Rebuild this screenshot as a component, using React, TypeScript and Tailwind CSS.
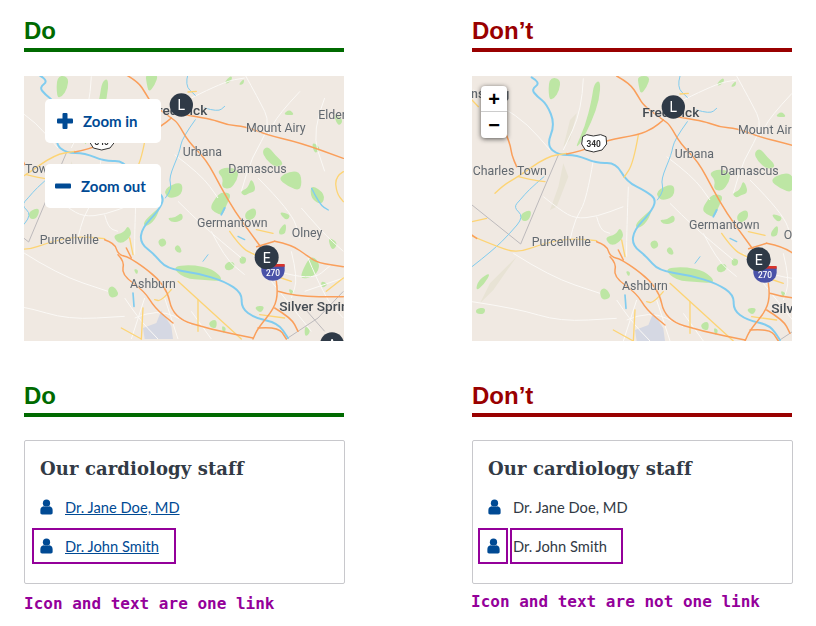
import type { ReactNode } from "react"

// map coordinates are 3x page pixels, both maps show the same drawing at different offsets
const greens = [
  "M405 380 L425 300 L432 250 L452 240 L448 300 L425 365 L392 430 L375 445 Z",
  "M296 232 L332 236 L328 272 L312 296 L296 300 Z",
  "M562 228 L602 228 L590 262 L572 284 L566 256 Z",
  "M798 254 L818 232 L824 242 L810 258 Z",
  "M840 262 L858 240 L858 258 Z",
  "M976 348 L994 334 L1010 350 L992 352 Z",
  "M912 458 L930 444 L950 470 L980 498 L952 510 L922 482 Z",
  "M776 520 L806 506 L842 516 L838 546 L816 574 L790 568 L796 540 Z",
  "M958 540 L1000 518 L1030 524 L1030 580 L990 566 Z",
  "M846 580 L870 570 L880 538 L896 578 L872 586 L858 594 Z",
  "M756 628 L772 600 L790 582 L822 586 L804 624 L794 652 L770 644 Z",
  "M858 644 L892 626 L896 656 L866 672 Z",
  "M962 696 L984 672 L984 706 L964 712 Z",
  "M628 658 L650 660 L672 642 L676 668 L640 674 Z",
  "M462 712 L498 704 L510 680 L524 712 L486 742 Z",
  "M598 728 L618 718 L628 738 L608 750 Z",
  "M648 748 L662 738 L674 764 L656 764 Z",
  "M798 802 L816 788 L832 798 L824 816 L804 818 Z",
  "M846 774 L866 778 L862 798 L844 796 Z",
  "M448 872 L466 862 L486 892 L456 902 Z",
  "M640 806 L700 800 L765 812 L800 850 L740 846 L680 842 Z",
  "M555 672 L590 640 L608 624 L592 666 L562 688 Z",
  "M86 838 L124 816 L102 854 L76 874 Z",
  "M78 926 L106 922 L104 942 L78 942 Z",
  "M212 640 L246 628 L238 662 L214 664 Z",
  "M616 572 L672 548 L674 590 L630 604 Z",
  "M886 926 L922 922 L908 948 Z",
  "M752 972 L776 962 L776 992 L756 988 Z",
  "M526 812 L542 816 L536 832 Z",
  "M790 982 L806 990 L796 1010 Z",
  "M990 870 L1010 880 L1000 896 Z",
  "M1030 824 L1060 768 L1088 800 L1072 834 L1030 844 Z",
  "M1058 558 L1102 588 L1092 622 L1058 602 Z",
  "M1108 716 L1142 734 L1122 762 Z",
  "M1088 848 L1112 858 L1092 872 Z",
  "M1124 340 L1158 366 L1140 388 Z",
  "M1060 430 L1090 450 L1070 470 Z",
  "M960 640 L1000 650 L985 670 Z",
  "M1040 980 L1060 1000 L1040 1020 Z",
]

const whites = [
  "M400 235 L396 330 L340 450",
  "M70 270 L160 322 L232 372 L300 450",
  "M430 480 L410 600 L376 656 L360 720",
  "M535 560 L530 700 L530 770",
  "M440 650 L450 690 L480 700",
  "M280 590 L330 630 L376 656 L440 650 L520 620",
  "M66 905 L200 925 L330 965 L500 955",
  "M190 760 L300 830 L450 880",
  "M660 610 L730 680 L850 780",
  "M860 228 L900 300 L940 380 L880 480 L850 580",
  "M900 540 L1000 640 L1026 720",
  "M650 470 L730 530 L780 600",
  "M1026 280 L960 350 L930 410",
  "M700 300 L800 250 L860 240",
  "M560 900 L520 1023",
  "M620 900 L660 1023",
  "M700 940 L760 1023",
  "M940 850 L980 900 L1060 1000",
  "M1050 780 L1100 900 L1156 960",
  "M1040 880 L1156 840",
  "M500 900 L540 960 L600 1023",
  "M530 960 L600 930 L700 980",
  "M880 760 L900 800 L960 860",
  "M1000 760 L1020 840 L1000 900",
  "M960 820 L1060 850 L1120 800",
  "M1030 630 L1090 700 L1156 760",
  "M1100 300 L1060 400 L1100 520",
  "M760 700 L800 780 L860 830",
]

const oranges = [
  "M500 228 L540 250 L565 290 L582 318 L640 360 L660 375 L690 430 L745 485 L790 570 L830 640 L885 715 L925 770",
  "M350 462 L400 452 L470 420 L565 405 L610 385 L640 360",
  "M680 350 L760 362 L810 382 L860 384 L930 412 L1026 434 L1156 481",
  "M165 395 L180 430 L185 465 L200 500",
  "M440 725 L470 735 L480 770 L520 780 L625 860 L645 960 L760 995 L885 1020",
  "M480 770 L500 790 L490 830 L560 880 L590 930 L645 975",
  "M520 780 L505 750",
  "M950 730 L1000 740 L1050 775 L1080 795 L1156 806",
  "M896 746 L950 730",
  "M955 850 L960 880 L950 930 L900 990 L885 1023",
  "M960 880 L1010 896 L1156 896",
  "M950 930 L1000 960 L1020 1000",
  "M900 990 L960 985 L985 1023",
  "M66 705 L80 715",
]

const yellows = [
  "M66 708 L130 735 L200 760 L280 730 L360 715 L440 722",
  "M135 580 L160 555 L205 530 L290 470 L350 460",
  "M205 530 L245 540 L285 545",
  "M66 665 L110 655",
  "M66 300 L85 320",
  "M565 405 L550 490 L522 532",
  "M515 720 L525 770",
  "M1156 521 L1131 536 L1136 586 L1156 611",
  "M815 700 L850 750 L890 770",
  "M895 695 L945 706",
  "M490 990 L550 1023",
  "M555 930 L550 1023",
  "M640 875 L610 910 L590 905",
  "M720 905 L720 1000",
  "M660 850 L850 1023",
  "M1000 850 L970 840",
  "M690 282 L715 280",
  "M1105 880 L1156 840",
  "M905 950 L980 960",
]

const rivers: [string, number][] = [
  ["M245 232 L272 248 L244 268 L262 290 L290 312 L315 372 L290 436 L325 465 L380 465 L440 490 L498 488 L530 545 L590 575 L620 600 L600 640 L552 690 L546 735 L590 770 L625 812 L720 826 L800 850 L852 885 L850 930 L890 960 L960 975 L990 1020", 6],
  ["M690 228 L680 262 L712 292", 3],
  ["M712 365 L672 420 L665 462 L632 540 L642 570 L622 600", 3],
  ["M66 800 L130 750 L180 700 L222 650 L190 622 L212 598 L236 570 L282 530", 3],
  ["M740 330 L780 342 L800 325", 3],
  ["M1061 571 L1085 620 L1111 636", 4],
  ["M525 885 L528 925", 5],
  ["M790 650 L800 630", 6],
  ["M840 715 L860 725", 4],
  ["M735 790 L750 770", 3],
]

// rounds off the corners of a hand-traced polyline
function smooth(d: string) {
  const closed = d.endsWith("Z")
  const nums = d.match(/[\d.]+/g)!.map(Number)
  const pts: [number, number][] = []
  for (let i = 0; i < nums.length; i += 2) pts.push([nums[i], nums[i + 1]])
  const mid = (a: [number, number], b: [number, number]) => `${(a[0] + b[0]) / 2} ${(a[1] + b[1]) / 2}`
  if (closed) {
    let out = `M${mid(pts[pts.length - 1], pts[0])}`
    pts.forEach((p, i) => {
      out += ` Q${p[0]} ${p[1]} ${mid(p, pts[(i + 1) % pts.length])}`
    })
    return out + " Z"
  }
  let out = `M${pts[0][0]} ${pts[0][1]}`
  for (let i = 1; i < pts.length - 1; i++) out += ` Q${pts[i][0]} ${pts[i][1]} ${mid(pts[i], pts[i + 1])}`
  const last = pts[pts.length - 1]
  return out + ` L${last[0]} ${last[1]}`
}

function MapArt({ viewBox, alt }: { viewBox: string; alt: string }) {
  return (
    <svg viewBox={viewBox} role="img" aria-label={alt} className="block h-[265px] w-[320px] font-['Roboto',sans-serif] blur-[0.4px]">
      <rect x="0" y="0" width="1300" height="1200" fill="#f0e9e2" />
      {/* ridge shading */}
      <path d="M340 490 L355 530 L320 620 L300 630 L325 560 Z M380 340 L360 420 L340 440 L360 360 Z M200 770 L130 870 L90 910 L120 850 Z" fill="#e8e3d5" />
      {greens.map((d) => (
        <path key={d} d={smooth(d)} fill="#bde6a4" />
      ))}
      <path d="M560 1023 L555 990 L595 975 L610 938 L640 985 L645 1023 Z" fill="#d5d8e3" />
      <g fill="none" stroke="#fbf9f6" strokeWidth="3">
        {whites.map((d) => (
          <path key={d} d={smooth(d)} />
        ))}
      </g>
      {/* state line */}
      <path d="M66 615 L212 732 L280 570 L325 465 M1156 880 L1080 960 L985 1023 M1030 920 L1100 1000" fill="none" stroke="#bdbabc" strokeWidth="3" />
      <g fill="none" stroke="#80ccef" strokeLinecap="round">
        {rivers.map(([d, w]) => (
          <path key={d} d={smooth(d)} strokeWidth={w} />
        ))}
      </g>
      <g fill="none" strokeLinecap="round">
        <g stroke="#fdd474" strokeWidth="4">
          {yellows.map((d) => (
            <path key={d} d={smooth(d)} />
          ))}
        </g>
        <g stroke="#fa9f5b" strokeWidth="4.5">
          {oranges.map((d) => (
            <path key={d} d={smooth(d)} />
          ))}
        </g>
      </g>
      {/* route shields */}
      <path d="M398 410 L410 404 L430 408 L452 404 L468 410 L470 432 L456 450 L431 456 L406 450 L395 432 Z" fill="#fff" stroke="#333" strokeWidth="3" />
      <text x="431" y="440" textAnchor="middle" fontSize="25" fontWeight="700" fill="#333">340</text>
      <path d="M910 802 L980 802 L980 818 C978 838 962 848 945 848 C928 848 912 838 910 818 Z" fill="#4a52a8" />
      <path d="M910 798 L980 798 L980 806 L910 806 Z" fill="#d9342b" />
      <text x="945" y="835" textAnchor="middle" fontSize="25" fontWeight="500" fill="#fff">270</text>
      <g fontSize="37" fill="#626970" stroke="#f0e9e2" strokeWidth="2" paintOrder="stroke">
        <text x="178" y="293" textAnchor="end" fontWeight="500">Martinsburg</text>
        <text x="68" y="525">Charles Town</text>
        <text x="245" y="739">Purcellville</text>
        <text x="516" y="871">Ashburn</text>
        <text x="674" y="473">Urbana</text>
        <text x="811" y="526">Damascus</text>
        <text x="717" y="688">Germantown</text>
        <text x="864" y="402">Mount Airy</text>
        <text x="1081" y="363">Elder</text>
        <text x="1001" y="718">Olney</text>
      </g>
      <g fontSize="41" fontWeight="500" fill="#454c53" stroke="#f0e9e2" strokeWidth="2" paintOrder="stroke">
        <text x="577" y="350">Frederick</text>
        <text x="964" y="939">Silver Spring</text>
      </g>
      <g fill="#2f3a47">
        <circle cx="670" cy="321" r="35" />
        <circle cx="926" cy="778" r="36" />
        <circle cx="1122" cy="1039" r="36" />
      </g>
      <g fill="#fff" fontSize="42" textAnchor="middle">
        <text x="670" y="336">L</text>
        <text x="926" y="794">E</text>
        <text x="1122" y="1056">A</text>
      </g>
    </svg>
  )
}

function Heading({ good, children }: { good: boolean; children: ReactNode }) {
  return (
    <h2
      className={
        good
          ? "h-[52px] border-b-4 border-[#006a00] pt-4 font-['Liberation_Sans',Arial,sans-serif] text-2xl leading-[30px] font-bold text-[#006a00]"
          : "h-[52px] border-b-4 border-[#990000] pt-4 font-['Liberation_Sans',Arial,sans-serif] text-2xl leading-[30px] font-bold text-[#990000]"
      }
    >
      {children}
    </h2>
  )
}

function PersonIcon() {
  return (
    <svg viewBox="0 0 14 16" className="h-4 w-[13px] shrink-0" fill="#004a94" aria-hidden="true">
      <circle cx="7" cy="3.9" r="3.9" />
      <path d="M4 7.2 C5.5 8.4 8.5 8.4 10 7.2 C12.4 7.4 13.6 9.2 13.6 11.5 L13.6 14.2 C13.6 15.4 12.9 16 11.8 16 L2.2 16 C1.1 16 .4 15.4 .4 14.2 L.4 11.5 C.4 9.2 1.6 7.4 4 7.2 Z" />
    </svg>
  )
}

function ZoomButton({ kind }: { kind: "in" | "out" }) {
  return (
    <div
      className={
        kind === "in"
          ? "flex h-11 w-[116px] items-center gap-[10px] rounded-[5px] bg-white pl-3"
          : "flex h-11 w-[116px] items-center gap-[10px] rounded-[5px] bg-white pl-[10px]"
      }
    >
      <svg viewBox="0 0 16 16" className="h-4 w-4 shrink-0" fill="#004a94" aria-hidden="true">
        {kind === "in" && <rect x="5.5" y="0" width="5" height="16" rx="1" />}
        <rect x="0" y="5.5" width="16" height="5" rx="1" />
      </svg>
      <span className="pt-px font-['Lato',sans-serif] text-[15px] font-bold text-[#004a94]">Zoom {kind}</span>
    </div>
  )
}

const cardTitle = "font-['DejaVu_Serif',serif] text-[18px] leading-6 font-bold tracking-[0.1px] text-[#323a45]"
const nameText = "font-['Lato',sans-serif] text-[14.7px] leading-5"

export default function App() {
  return (
    <div className="grid w-[816px] grid-cols-[320px_320px] gap-x-[128px] bg-white px-6 pb-[16px]">
      <section>
        <Heading good>Do</Heading>
        <div className="relative mt-6 h-[265px] overflow-hidden">
          <MapArt viewBox="198 234 960 795" alt="Map with labelled zoom buttons" />
          <div className="absolute top-[23px] left-[21px] flex flex-col gap-[21px]">
            <ZoomButton kind="in" />
            <ZoomButton kind="out" />
          </div>
        </div>
      </section>

      <section>
        <Heading good={false}>Don’t</Heading>
        <div className="relative mt-6 h-[265px] overflow-hidden">
          <MapArt viewBox="66 228 960 795" alt="Map with small zoom buttons" />
          <div className="absolute top-[10px] left-[9px] flex w-[26px] flex-col rounded-[4px] bg-white font-['Liberation_Sans',sans-serif] text-[20px] font-bold text-black shadow-[0_1px_5px_rgba(0,0,0,0.65)]">
            <div className="flex h-[26px] items-center justify-center border-b border-[#cccccc]">+</div>
            <div className="flex h-[26px] items-center justify-center">−</div>
          </div>
        </div>
      </section>

      <section className="mt-6">
        <Heading good>Do</Heading>
        <div className="mt-[23px] h-[144px] w-[321px] rounded-[2px] border border-[#c8c8cc] px-[15px] pt-4">
          <h3 className={cardTitle}>Our cardiology staff</h3>
          <div className="mt-[8px] flex h-9 items-center gap-3 text-[#004a94]">
            <PersonIcon />
            <a className={`${nameText} underline`}>Dr. Jane Doe, MD</a>
          </div>
          <div className="-mx-2 mt-[3px] flex h-9 w-[144px] items-center gap-3 border-2 border-[#94009a] pl-[6px] text-[#004a94]">
            <PersonIcon />
            <a className={`${nameText} underline`}>Dr. John Smith</a>
          </div>
        </div>
        <p className="mt-[10px] font-['DejaVu_Sans_Mono',monospace] text-base leading-5 font-bold text-[#94009a]">Icon and text are one link</p>
      </section>

      <section className="mt-6">
        <Heading good={false}>Don’t</Heading>
        <div className="mt-[23px] h-[144px] w-[321px] rounded-[2px] border border-[#c8c8cc] px-[15px] pt-4">
          <h3 className={cardTitle}>Our cardiology staff</h3>
          <div className="mt-[8px] flex h-9 items-center gap-3 text-[#323a45]">
            <PersonIcon />
            <span className={nameText}>Dr. Jane Doe, MD</span>
          </div>
          <div className="-ml-[10px] mt-[3px] flex text-[#323a45]">
            <div className="flex h-9 w-[30px] items-center justify-center border-2 border-[#94009a]">
              <PersonIcon />
            </div>
            <div className="ml-[2px] flex h-9 w-[113px] items-center border-2 border-[#94009a] pl-px">
              <span className={nameText}>Dr. John Smith</span>
            </div>
          </div>
        </div>
        <p className="mt-[8px] -ml-px font-['DejaVu_Sans_Mono',monospace] text-base leading-5 font-bold text-[#94009a]">Icon and text are not one link</p>
      </section>
    </div>
  )
}
